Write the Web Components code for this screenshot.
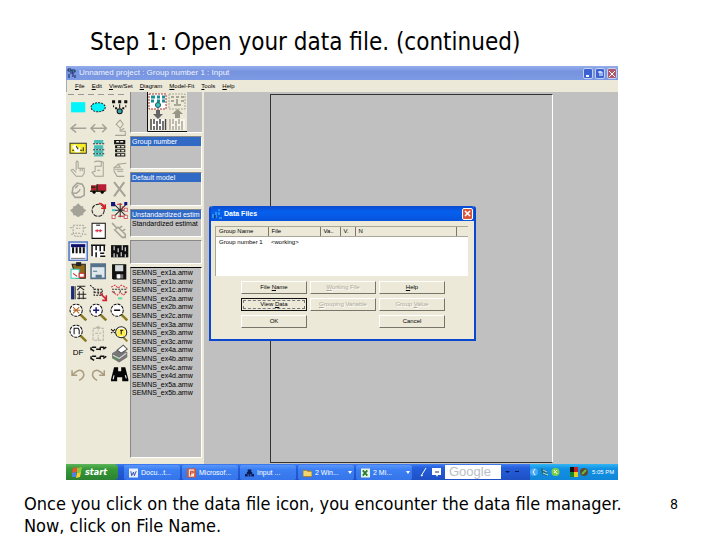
<!DOCTYPE html>
<html lang="en">
<head>
<meta charset="utf-8">
<title>Step 1: Open your data file</title>
<style>
  body {
    margin: 0;
    background: #fff;
    color: #000;
    font-family: "DejaVu Sans Condensed", "DejaVu Sans", sans-serif;
  }
</style>
</head>
<body>
<slide-page>
  <span slot="title">Step 1: Open your data file. (continued)</span>
  <app-window heading="Unnamed project : Group number 1 : Input"></app-window>
  <span slot="caption">Once you click on the data file icon, you encounter the data file manager. Now, click on File Name.</span>
  <span slot="number">8</span>
</slide-page>

<script>
const UI_FONT = '"Liberation Sans", Arial, sans-serif';

// toolbox icons, all on a 20x20 grid
const HAND = 'fill="none" stroke="#a5a298"';
const LENS = '<path d="M12 12l6 6" stroke="#8a7a20" stroke-width="2.5"/><circle cx="8" cy="8" r="6" fill="#fff" stroke="#111" stroke-dasharray="3 1"/>';
const ICONS = {
  rect: '<path d="M3 5h14v10H3z" fill="#00f4fa"/>',
  ellipse: '<ellipse cx="10" cy="10" rx="7" ry="4.5" fill="#00f4fa" stroke="#222" stroke-dasharray="2 1"/>',
  latent: '<g fill="#111"><path d="M3 3h3v3H3zM9 3h3v3H9zM15 3h3v3h-3zM4 8h1v2H4zM10 7h1v4h-1zM16 8h1v2h-1zM6 10h2v2H6zM13 10h2v2h-2z"/></g><circle cx="10.5" cy="14" r="2.5" fill="#3aa" stroke="#111"/>',
  path: '<path d="M4 10h14M8 6l-5 4 5 4" fill="none" stroke="#a5a298" stroke-width="1.5"/>',
  cov: '<path d="M3 10h15M7 6l-4 4 4 4M14 6l4 4-4 4" fill="none" stroke="#a5a298" stroke-width="1.5"/>',
  unique: '<path d="M6 17h10v-4h-5v-3M11 10l-4-4 4-4 3 4zM12 12l3-2" fill="none" stroke="#a5a298"/>',
  caption: '<path d="M2 5h16v10H2z" fill="#f7ec28" stroke="#333"/><path d="M4 8l3-2 3 5 2-3v6H7z" fill="#fff"/><path d="M4 12h2M8 8l2 3M12 12h2M15 9v4" stroke="#222"/>',
  invars: '<path d="M6 2h9v3H6zM6 7h9v4H6zM6 12h9v3H6zM6 16h9v2H6z" fill="#48bdb7"/><path d="M5 5.5h11M5 11.5h11M5 15.5h11" stroke="#153535" stroke-dasharray="2 1"/>',
  dataset: '<path d="M5 2h11v4H5zM6 7h10v3H6zM6 11h10v3H6zM6 15h10v3H6z" fill="#151515"/><path d="M7 3.5h7M8 8.5h7M8 12.5h7M8 16.5h7" stroke="#ece9d8" stroke-width="1.5" stroke-dasharray="3 1"/>',
  pick: `<path d="M8 11V3q1-2 2 0v6h6v5l-2 3H8l-5-6 2-1 3 3M12 9v3M14 9v3" ${HAND}/>`,
  pickall: `<path d="M6 3q3-2 9 0v14H7l-3-4 3-1V7h6V3M9 11h3" ${HAND}/>`,
  drop: `<path d="M17 4l-8 1 2 3H5v4l3 5h7M6 10h8M8 12h6M9 5l-3 3" ${HAND}/>`,
  move: `<path d="M5 8l4-4 5 1 2 4v7l-4 2H7l-3-4zM7 9l3-3M4 13q5 3 8-3" ${HAND} stroke-width="1.5"/>`,
  truck: '<path d="M3 6h6V5h9v7H3z" fill="#b91d35"/><path d="M3 8h4M9 5v7M2 12h15" stroke="#231" stroke-width="1.5"/><circle cx="6" cy="13" r="1.5"/><circle cx="14" cy="13" r="1.5"/>',
  erase: '<path d="M5 3l11 14M15 3L5 17M10 9h1" fill="none" stroke="#a5a298" stroke-width="2"/>',
  shape: '<path d="M10 3l3 3h2v2l3 2-3 3v2h-2l-3 2-3-2H5v-2l-3-3 3-2V6h2z" fill="#a5a298"/>',
  rotate: '<circle cx="10" cy="10" r="6" fill="none" stroke="#222" stroke-dasharray="4 1"/><path d="M11 3q5 1 5 5M13 8h4V4" fill="none" stroke="#e01b28" stroke-width="1.5"/>',
  reflect: '<path d="M5 4l6 6 6-6M5 16l6-6 6 6M11 3v14M3 10h15" fill="none" stroke="#262626"/><path d="M2 2h4v4H2zM15 2h3v3h-3z" fill="#14147a"/><path d="M8 4h5M9 16h6M13 6v4" stroke="#cf2036"/><path d="M3 9h3v2H3z" fill="#3cc"/><path d="M3 15h3v3H3zM15 15h3v3h-3zM15 8h3v3h-3z" fill="#fff" stroke="#c66"/>',
  param: '<path d="M5 5h10v7l-2 4H7l-2-4zM2 7l2 1M16 8l2-1M8 8h4M7 13h6M3 14h2M16 14h2" fill="none" stroke="#a5a298" stroke-dasharray="2 1"/>',
  page: '<path d="M4 3h13v15H4z" fill="#fff" stroke="#111"/><path d="M7 10.5h7M9 9v3M12 9v3" stroke="#cf2036"/><path d="M8 5h4" stroke="#111"/>',
  touch: '<path d="M3 3l5 5M5 10l4-3 7 7v3h-3l-7-7M10 8l3-2M13 11l3-2" fill="none" stroke="#a5a298" stroke-width="1.5"/>',
  data: '<path d="M1 1h18v18H1z" fill="#dfe6f8" stroke="#5278c6" stroke-width="1.5"/><path d="M3 3h14v14H3z" fill="#fff"/><path d="M3 3h14v3H3z" fill="#10106c"/><path d="M5 6v6M8.5 6v6M12 6v6M15.5 6v6" stroke="#111" stroke-width="2"/><path d="M3 17h14" stroke="#777"/>',
  props: '<path d="M3 4h14v12H3z" fill="#fff"/><path d="M3 4h14M4 4v11M8 4v5M12 4v6M16 4v6M8 11v5M12 12h4M12 15h5" stroke="#111" stroke-width="1.5"/>',
  calc: '<path d="M2 4h17v12H2z" fill="#111"/><path d="M5 5v4M9 7v4M13 4v5M16 6v4M5 12v4M8 13v3M12 11v4M16 13v3" stroke="#fff"/>',
  copy: '<path d="M4 3h13v14H8z" fill="#8f6a1c" stroke="#222"/><path d="M8 1h5v4H8z" fill="#222"/><path d="M3 8h8v9H3z" fill="#fff" stroke="#3cb"/><path d="M5 12l4 3M11 12h5v4h-5z" fill="#fff" stroke="#c22"/>',
  text: '<path d="M3 3h14v14H3z" fill="#dfe8ec" stroke="#55728a" stroke-width="1.5"/><path d="M3 3h14v3H3z" fill="#55728a"/><path d="M5 10h4M8 14h5v2H8z" stroke="#55728a" fill="#55728a"/>',
  save: '<path d="M3 3h14v15H4l-1-1z" fill="#111"/><path d="M6 4h8v6H6z" fill="#d9dcdc"/><path d="M7 13h7v4H7z" fill="#777"/><path d="M8 13h3v4H8z" fill="#fff"/>',
  object: '<path d="M3 4h3v13H3z" fill="#182b78"/><path d="M7 4v13M9 4h8M9 8l3-3 4 3M9 12h9M9 16h9M11 9v8M15 9v8" fill="none" stroke="#222"/>',
  drag: '<path d="M2 3l5 4M6 7h8v6H6zM6 10h8M10 7v6" fill="none" stroke="#222" stroke-dasharray="2 1"/><path d="M12 11l6 6M18 13v5h-4" fill="none" stroke="#d32031" stroke-width="1.5"/>',
  symmetry: '<path d="M2 5l4-2 3 3 3-3 6 3M3 9l5 4 3-3 3 3 4-4" fill="none" stroke="#d53342" stroke-dasharray="2 1"/><path d="M3 7h15M5 9v3M11 8v3M16 9v3" stroke="#333" stroke-dasharray="2 1"/><path d="M9 15h4v2H9z" fill="#5fdb9c"/>',
  zoomsel: LENS + '<path d="M5 5l6 6M11 5l-6 6M5 8h7" stroke="#b4671f"/>',
  zoomin: LENS + '<path d="M5 8h6M8 5v6" stroke="#18187e" stroke-width="1.5"/>',
  zoomout: LENS + '<path d="M5 8h6" stroke="#111" stroke-width="1.5"/>',
  zoompage: LENS + '<path d="M6 11V5h4l1 2v4" fill="none" stroke="#111"/>',
  resize: '<path d="M5 5h10v12H5zM10 3v5M8 5l2-2 2 2M10 17v-5M7 10h6" fill="none" stroke="#b5b2a6" stroke-dasharray="3 1"/>',
  loupe: '<path d="M13 13l5 5" stroke="#8a7a20" stroke-width="2"/><circle cx="12" cy="9" r="5.5" fill="#fff" stroke="#222"/><path d="M8 6h8v7H8z" fill="#ffee4a"/><path d="M2 6l4 4M6 6l-4 4M11 7h3M12 7v4" stroke="#111"/>',
  multi: '<path d="M4 4h4M3 6l3 2M12 4h4M15 6l3-2M8 6h4M4 13h4M3 15l3 2M12 13h4M15 15l3-2M8 15h4M3 4v3M12 4v3M3 13v3M12 13v3" fill="none" stroke="#111" stroke-width="1.5"/>',
  print: '<path d="M3 10l8-5 7 4v5l-8 5-7-4z" fill="#777"/><path d="M8 7l6-5 4 4-6 4z" fill="#fff" stroke="#555"/><path d="M4 12l6 3 7-5" fill="none" stroke="#ddd"/><path d="M5 14l3 2" stroke="#2b2"/>',
  undo: '<path d="M4 6v5h5M4 11q7-8 11-3 2 5-4 8" fill="none" stroke="#aa9c7e" stroke-width="1.5"/>',
  redo: '<path d="M16 6v5h-5M16 11Q9 3 5 8q-2 5 4 8" fill="none" stroke="#aa9c7e" stroke-width="1.5"/>',
  search: '<path d="M5 3h4v4h3V3h4l3 12v2h-6v-4H8v4H2v-2z" fill="#050505"/><path d="M5 11l-1 4M10 5v1M16 11l1 3" stroke="#fff"/>'
};
const TOOLS = ['rect', 'ellipse', 'latent', 'path', 'cov', 'unique', 'caption', 'invars', 'dataset',
  'pick', 'pickall', 'drop', 'move', 'truck', 'erase', 'shape', 'rotate', 'reflect',
  'param', 'page', 'touch', 'data', 'props', 'calc', 'copy', 'text', 'save',
  'object', 'drag', 'symmetry', 'zoomsel', 'zoomin', 'zoomout', 'zoompage', 'resize', 'loupe',
  'df', 'multi', 'print', 'undo', 'redo', 'search'];

class SlidePage extends HTMLElement {
  connectedCallback() {
    this.attachShadow({ mode: 'open' }).innerHTML = `
      <style>
        :host { display: block; padding-top: 28px; }
        h1 { margin: 0 0 10px 90px; font-size: 24px; line-height: 28px; font-weight: 400; }
        main { margin: 0 102px 0 66px; }
        footer { display: flex; margin: 13px 42px 0 24px; justify-content: space-between; }
        p { margin: 0; flex: 0 1 600px; font-size: 18px; line-height: 22px; }
        small { font-size: 14px; line-height: 22px; }
      </style>
      <h1><slot name="title"></slot></h1>
      <main><slot></slot></main>
      <footer><p><slot name="caption"></slot></p><small><slot name="number"></slot></small></footer>`;
  }
}
customElements.define('slide-page', SlidePage);

class AppWindow extends HTMLElement {
  connectedCallback() {
    const menus = ['File', 'Edit', 'View/Set', 'Diagram', 'Model-Fit', 'Tools', 'Help'];
    this.attachShadow({ mode: 'open' }).innerHTML = `
      <style>
        :host { display: block; font-family: ${UI_FONT}; background: #ece9d8; }
        header {
          display: flex; align-items: center; gap: 2px; height: 14px; padding: 0 1px;
          background: linear-gradient(#93aeea, #7793df 40%, #7d9ae4);
        }
        h2 { flex: 1; margin: 0; color: #eef3ff; font: 400 8px/14px ${UI_FONT}; }
        header button { width: 10px; height: 11px; padding: 0; border: 1px solid #c3d0f2; border-radius: 2px; background: #3c63d2; }
        header .close { background: #b0586c; }
        svg { display: block; }
        nav { display: flex; gap: 7px; height: 12px; padding-left: 8px; border-left: 1px solid #aaa; }
        nav button { border: 0; padding: 0; background: none; font: 6px/12px ${UI_FONT}; }
        .work { display: flex; height: 372px; }
        .side { display: flex; flex-direction: column; gap: 3px; width: 72px; margin: 0 2px 0 1px; }
        .preview { display: flex; justify-content: center; height: 41px; background: #c0c0c0; border-left: 1px solid #888; border-bottom: 1px solid #fff; box-sizing: border-box; }
        .canvas { position: relative; flex: 1; background: #c0c0c0; padding: 2px 65px 1px 66px; }
        .sheet { height: 100%; box-sizing: border-box; border: 1px solid #333; border-right-color: #fff; }
        data-dialog { position: absolute; left: 5px; top: 114px; }
      </style>
      <header>
        <svg width="10" height="12"><path d="M1 2h3v2H1zM5 3h3v2H5zM2 7v4M6 6v4M8 8v3M3 6h3" stroke="#18245d" fill="#6cc"/></svg>
        <h2>${this.getAttribute('heading')}</h2>
        <button aria-label="Minimize"><svg width="8" height="9"><path d="M2 7h3" stroke="#fff" stroke-width="2"/></svg></button>
        <button aria-label="Restore"><svg width="8" height="9"><path d="M2 3h4v4M4 2v5" fill="none" stroke="#fff"/></svg></button>
        <button class="close" aria-label="Close"><svg width="8" height="9"><path d="M1 2l6 6M7 2L1 8" stroke="#fff"/></svg></button>
      </header>
      <nav>${menus.map(m => `<button><u>${m[0]}</u>${m.slice(1)}</button>`).join('')}</nav>
      <div class="work">
        <tool-box></tool-box>
        <div class="side">
          <div class="preview">
            <svg width="40" height="40" viewBox="0 0 40 40">
              <path d="M0 0h40v40H0z" fill="#ece9d8"/><path d="M.5 0v39.5H40" fill="none" stroke="#111"/>
              <path d="M2 2h17v15H2z" fill="#fff" stroke="#a33" stroke-dasharray="2 1"/>
              <path d="M4 5h4M10 5h3M15 5h3M4 9h3M10 9h3M15 9h3" stroke="#178d96" stroke-width="3"/>
              <circle cx="11" cy="13" r="2.5" fill="#3bc6c2" stroke="#155"/>
              <path d="M9 18h4v4h3l-5 5-5-5h3z" fill="#666"/>
              <path d="M3 27h16v11H3z" fill="#fff"/><path d="M4 27v11M7 27v5M7 34v4M10 29v9M13 27v5M13 34v4M16 29v9M18.5 27v11" stroke="#444" stroke-width="1.5"/>
              <path d="M22 2h16v15H22z" fill="none" stroke="#aaa695" stroke-dasharray="2 1"/>
              <path d="M24 5h3M29 5h3M34 5h3M24 9h3M34 9h3M30 7v7M27 13h7" stroke="#aaa695" stroke-width="2"/>
              <path d="M28 26h5v-4h3l-5.5-5-5.5 5h3z" fill="#999585"/>
              <path d="M22 27h16v11H22z" fill="#f7f5ec"/><path d="M23 27v11M26 27v5M26 34v4M29 29v9M32 27v5M32 34v4M35 29v9" stroke="#aaa695" stroke-width="1.5"/>
            </svg>
          </div>
          <list-panel size="short" items="Group number" selected></list-panel>
          <list-panel size="mid" items="Default model" selected></list-panel>
          <list-panel size="pair" items="Unstandardized estim|Standardized estimat" selected></list-panel>
          <list-panel size="empty" items=""></list-panel>
          <list-panel size="files" items="${['1a', '1b', '1c', '2a', '2b', '2c', '3a', '3b', '3c', '4a', '4b', '4c', '4d', '5a', '5b'].map(n => `SEMNS_ex${n}.amw`).join('|')}"></list-panel>
        </div>
        <div class="canvas">
          <div class="sheet"></div>
          <data-dialog></data-dialog>
        </div>
      </div>
      <task-bar></task-bar>`;
  }
}
customElements.define('app-window', AppWindow);

class ToolBox extends HTMLElement {
  connectedCallback() {
    const cell = name => name === 'df'
      ? '<button>DF</button>'
      : `<button aria-label="${name}"><svg viewBox="0 0 20 20">${ICONS[name]}</svg></button>`;
    this.attachShadow({ mode: 'open' }).innerHTML = `
      <style>
        :host { display: block; width: 63px; background: #ece9d8; }
        hr { height: 1px; margin: 2px; border: 0; background: repeating-linear-gradient(90deg, #999 0 6px, transparent 6px 10px); }
        .grid { display: grid; grid-template: repeat(14, 1fr) / repeat(3, 1fr); height: 287px; margin: 0 0 0 2px; }
        button { padding: 0; border: 0; background: none; min-height: 0; font: 400 8px/20px ${UI_FONT}; }
        svg { display: block; width: 100%; height: 100%; }
      </style>
      <hr>
      <div class="grid">${TOOLS.map(cell).join('')}</div>`;
  }
}
customElements.define('tool-box', ToolBox);

class ListPanel extends HTMLElement {
  connectedCallback() {
    const items = this.getAttribute('items').split('|').filter(Boolean);
    this.attachShadow({ mode: 'open' }).innerHTML = `
      <style>
        :host {
          display: block; box-sizing: border-box; overflow: hidden;
          background: #c0c0c0; border: 1px solid #fff; border-top-color: #888; border-left-color: #888;
          font: 7px/9px ${UI_FONT};
        }
        :host([size="short"]) { height: 33px; }
        :host([size="mid"]) { height: 34px; }
        :host([size="pair"]) { height: 28px; }
        :host([size="empty"]) { height: 24px; }
        :host([size="files"]) { flex: 1; margin-bottom: 6px; border-top-color: #000; }
        ul { margin: 0; padding: 0; list-style: none; display: grid; white-space: nowrap; }
        :host([size="files"]) ul { grid-template-rows: repeat(15, 1fr); height: 129px; }
        li { padding-left: 1px; min-height: 0; }
        :host([selected]) li:first-child { background: #316ac5; color: #fff; }
      </style>
      <ul>${items.map(i => `<li>${i}</li>`).join('')}</ul>`;
  }
}
customElements.define('list-panel', ListPanel);

class DataDialog extends HTMLElement {
  connectedCallback() {
    this.attachShadow({ mode: 'open' }).innerHTML = `
      <style>
        :host {
          display: block; box-sizing: border-box; width: 267px; height: 135px;
          background: #ece9d8; border: 2px solid #0a47cf; border-top: 0; border-radius: 3px 3px 0 0;
          font: 6px/9px ${UI_FONT};
        }
        header { display: flex; align-items: center; gap: 2px; height: 15px; padding: 0 1px; background: linear-gradient(#0a4bd0, #0560ee 40%, #0753dc); border-radius: 2px 2px 0 0; }
        h3 { flex: 1; margin: 0; color: #fff; font: 700 7px/15px ${UI_FONT}; }
        .close { width: 11px; height: 12px; padding: 0; border: 1px solid #fff; border-radius: 2px; background: #d9583c; }
        .list { height: 50px; box-sizing: border-box; margin: 5px 6px 0 4px; background: #fff; border: 1px solid #a9a796; border-right: 0; border-bottom: 0; }
        table { width: 100%; table-layout: fixed; border-collapse: collapse; }
        th { font-weight: 400; text-align: left; padding: 0 0 0 3px; height: 9px; background: #ece9d8; border-right: 1px solid #777; border-bottom: 1px solid #aca899; }
        th:last-child { border-right: 0; }
        td { padding: 1px 0 0 3px; white-space: nowrap; }
        .buttons { display: grid; grid-template-columns: repeat(3, 66px); gap: 4px 3px; margin: 5px 0 0 30px; }
        .buttons button {
          height: 13px; padding: 0; font: 6px/11px ${UI_FONT};
          background: #ece9d8; border: 1px solid #fff; border-right-color: #77756a; border-bottom-color: #77756a;
        }
        .buttons button:disabled { color: #aca899; text-shadow: 1px 1px #fff; }
        .buttons .focus { border: 1px solid #111; outline: 1px dashed #777; outline-offset: -3px; }
        .buttons :last-child { grid-column: 3; }
      </style>
      <header>
        <svg width="10" height="12"><path d="M1 10V6M4 10V4M6 2h2M7 4v3M7 10h3" stroke="#52c5f5"/><path d="M3 10V7" stroke="#061b55"/></svg>
        <h3>Data Files</h3>
        <button class="close" aria-label="Close"><svg width="9" height="10" style="display:block"><path d="M2 2l5 5M7 2L2 7" stroke="#fff" stroke-width="1.5"/></svg></button>
      </header>
      <div class="list">
        <table>
          <colgroup><col style="width:52px"><col style="width:52px"><col style="width:20px"><col style="width:15px"><col><col style="width:12px"></colgroup>
          <thead><tr><th>Group Name</th><th>File</th><th>Va..</th><th>V.</th><th>N</th><th></th></tr></thead>
          <tbody><tr><td>Group number 1</td><td>&lt;working&gt;</td><td></td><td></td><td></td><td></td></tr></tbody>
        </table>
      </div>
      <div class="buttons">
        <button>File <u>N</u>ame</button>
        <button disabled><u>W</u>orking File</button>
        <button><u>H</u>elp</button>
        <button class="focus">View <u>D</u>ata</button>
        <button disabled><u>G</u>rouping Variable</button>
        <button disabled>Group <u>V</u>alue</button>
        <button>OK</button>
        <button>Cancel</button>
      </div>`;
  }
}
customElements.define('data-dialog', DataDialog);

class TaskBar extends HTMLElement {
  connectedCallback() {
    const tasks = [
      ['Docu...t...', '<path d="M0 0h10v10H0z" fill="#eaf0ff"/><path d="M2 3l1 5 2-4 1 4 2-5" fill="none" stroke="#214aa5"/>'],
      ['Microsof...', '<path d="M0 0h10v10H0z" fill="#d9532e"/><path d="M2 1h6v8H2z" fill="#fbe9df"/><path d="M4 8V3h3v2H4" fill="none" stroke="#b32c12"/>'],
      ['Input ...', '<path d="M3 1h4v3H3zM0 6h3v3H0zM4 6h2v3H4zM7 6h3v3H7zM2 4h6v2H2z" fill="#0a1c55"/>'],
      ['2 Win...', '<path d="M0 2h4l1 1h5v6H0z" fill="#f3d36b" stroke="#a27e20"/>', 1],
      ['2 Mi...', '<path d="M0 0h10v10H0z" fill="#e7f4e4"/><path d="M2 2l5 6M7 2L2 8" stroke="#2c7d32" stroke-width="2"/>', 1]
    ];
    this.attachShadow({ mode: 'open' }).innerHTML = `
      <style>
        :host { display: flex; height: 16px; background: linear-gradient(#3f7cf0, #245edb 25%, #1f50c4); color: #fff; }
        button { border: 0; padding: 0; color: #fff; font: 7px/16px ${UI_FONT}; }
        .start {
          display: flex; align-items: center; gap: 3px; width: 52px; padding-left: 6px; margin-right: 6px;
          border-radius: 0 4px 4px 0; background: linear-gradient(#5cb55a, #379a38 30%, #2b8030);
          font: italic 700 9px/16px "DejaVu Sans Condensed", sans-serif;
        }
        .task { display: flex; flex: 0 1 56px; min-width: 0; align-items: center; gap: 3px; margin: 1px 2px 0 0; padding-left: 5px; border-radius: 2px; background: linear-gradient(#5a96fa, #3c80f3 30%, #3674ea); }
        .task span { flex: 1; text-align: left; white-space: nowrap; overflow: hidden; line-height: 15px; }
        svg { flex: none; }
        .band { display: flex; align-items: center; gap: 4px; padding: 0 4px; flex: 1; }
        input { width: 56px; height: 14px; box-sizing: border-box; border: 0; padding: 0 4px; background: #fff; font: 13px/14px "Liberation Sans", sans-serif; }
        input::placeholder { color: #b9c0c8; opacity: 1; }
        .tray { display: flex; align-items: center; gap: 2px; width: 88px; background: linear-gradient(#31b5f4, #1191e4 30%, #1186d8); font: 6px/16px ${UI_FONT}; }
        .tray time { white-space: nowrap; }
      </style>
      <button class="start"><svg width="10" height="12"><path d="M1 2l4-1v5L0 7z" fill="#e8552e"/><path d="M5 2l5-1-1 5-4 1z" fill="#8cc63e"/><path d="M0 7l4-1v5H0z" fill="#4a82e8"/><path d="M5 7l4-1-1 5-4 1z" fill="#f7cd3a"/></svg>start</button>
      ${tasks.map(([t, i, arrow]) => `<button class="task"><svg width="9" height="10" viewBox="0 0 10 10">${i}</svg><span>${t}</span>${arrow ? '<svg width="7" height="4"><path d="M1 0h4L3 3z" fill="#fff"/></svg>' : ''}</button>`).join('')}
      <div class="band">
        <svg width="10" height="12"><path d="M3 10l5-8M3 10l2-1" stroke="#fff"/></svg>
        <svg width="9" height="12"><path d="M0 2h9v7H6l-1 2-1-2H0z" fill="#fff"/><path d="M3 6h4" stroke="#234"/></svg>
        <input aria-label="Search" placeholder="Google">
        <svg width="14" height="8"><path d="M0 3h5L2.5 5zM10 3h4v1h-4z" fill="#091a55"/></svg>
      </div>
      <div class="tray">
        <svg width="8" height="12"><circle cx="4" cy="6" r="4" fill="#49a9f5"/><path d="M5 3L3 6l2 3" fill="none" stroke="#fff"/></svg>
        <svg width="9" height="12"><path d="M1 2l6 3v5L2 8z" fill="#1c6c77"/><path d="M3 4l4 2M3 7l5 2" stroke="#cde"/></svg>
        <svg width="9" height="12"><circle cx="4.5" cy="6" r="4" fill="#80cf47"/><path d="M3 4l3 4M6 4L3 7" stroke="#fff"/></svg>
        <svg width="28" height="12"><path d="M8 1h4v5H8z" fill="#101010"/><path d="M12 1h4v5h-4z" fill="#c31e22"/><path d="M8 6h4v5H8z" fill="#17852b"/><path d="M12 6h4v5h-4z" fill="#e8cb20"/><circle cx="22" cy="6" r="4" fill="#574e30"/><path d="M20 8l4-4" stroke="#76b34d" stroke-width="2"/></svg>
        <time>5:05 PM</time>
      </div>`;
  }
}
customElements.define('task-bar', TaskBar);
</script>
</body>
</html>
